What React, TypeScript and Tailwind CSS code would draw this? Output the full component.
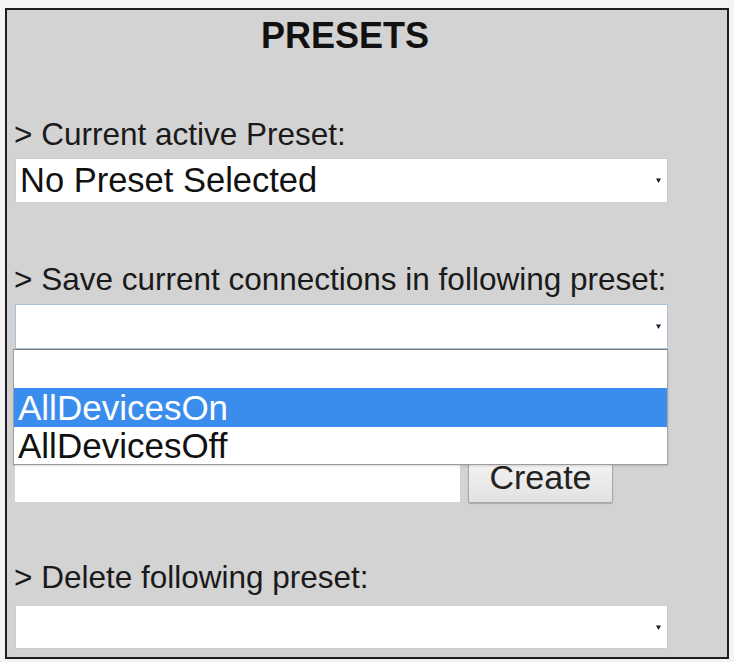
import React from "react"

const FONT = { fontFamily: '"Liberation Sans", Arial, sans-serif' }

const Arrow = () => (
  <svg width="7" height="7" viewBox="0 0 7 7" className="shrink-0">
    <path d="M1 1.5 L6 1.5 L3.5 6 Z" fill="#1f1f1f" />
  </svg>
)

const Select = ({ value, className = "" }: { value?: string; className?: string }) => (
  <div
    className={`w-[653px] bg-white border flex items-center justify-between pl-[4px] pr-[5px] ${className}`}
  >
    <span className="text-[34.5px] leading-none text-[#111] whitespace-nowrap">{value}</span>
    <Arrow />
  </div>
)

const Label = ({ text, className = "" }: { text: string; className?: string }) => (
  <div className={`text-[31.5px] leading-[36px] h-[36px] text-[#1a1a1a] -ml-[1px] whitespace-nowrap ${className}`}>
    {text}
  </div>
)

export default function App() {
  return (
    <div className="min-h-screen bg-[#f3f3f3] pt-[8px] pl-[5px]" style={FONT}>
      <div className="w-[724px] h-[651px] border-2 border-[#1e1e1e] bg-[#d3d3d3]">
        <div className="flex flex-col pl-[8px] pt-[6px]">
          <div className="w-[653px] h-[40px] leading-[40px] text-[36px] font-bold text-center pl-[7px] text-[#111]">
            PRESETS
          </div>

          <Label text="> Current active Preset:" className="mt-[60px]" />
          <Select value="No Preset Selected" className="mt-[6px] h-[45px] border-[#cdcdcd]" />

          <Label text="> Save current connections in following preset:" className="mt-[58px]" />
          <div className="relative mt-[7px] z-10">
            <Select className="h-[45px] border-[#a9c3de]" />
            {/* open dropdown list */}
            <div className="absolute top-[45px] -left-[2px] w-[655px] h-[116px] bg-white border border-t-[#7d7d7d] border-x-[#a3a3a3] border-b-[#9c9c9c] shadow-[0_1px_2px_rgba(0,0,0,0.15)] flex flex-col">
              <div className="h-[38px]" />
              <div className="h-[39px] bg-[#3a8ded] text-white text-[35px] leading-[39px] pl-[4px] whitespace-nowrap">
                AllDevicesOn
              </div>
              <div className="h-[37px] text-[#111] text-[35px] leading-[37px] pl-[4px] whitespace-nowrap">
                AllDevicesOff
              </div>
            </div>
          </div>

          <div className="mt-[106px] flex items-start gap-[8px]">
            <div className="mt-[3px] w-[445px] h-[44px] bg-white" />
            <button className="w-[145px] h-[48px] pb-[4px] rounded-[2px] border border-[#a8a8a8] bg-gradient-to-b from-[#f6f6f6] to-[#e1e1e1] shadow-[0_1px_1px_rgba(0,0,0,0.2)] text-[34px] leading-none text-[#222]">
              Create
            </button>
          </div>

          <Label text="> Delete following preset:" className="mt-[56px]" />
          <Select className="mt-[10px] h-[44px] border-[#cdcdcd]" />
        </div>
      </div>
    </div>
  )
}
